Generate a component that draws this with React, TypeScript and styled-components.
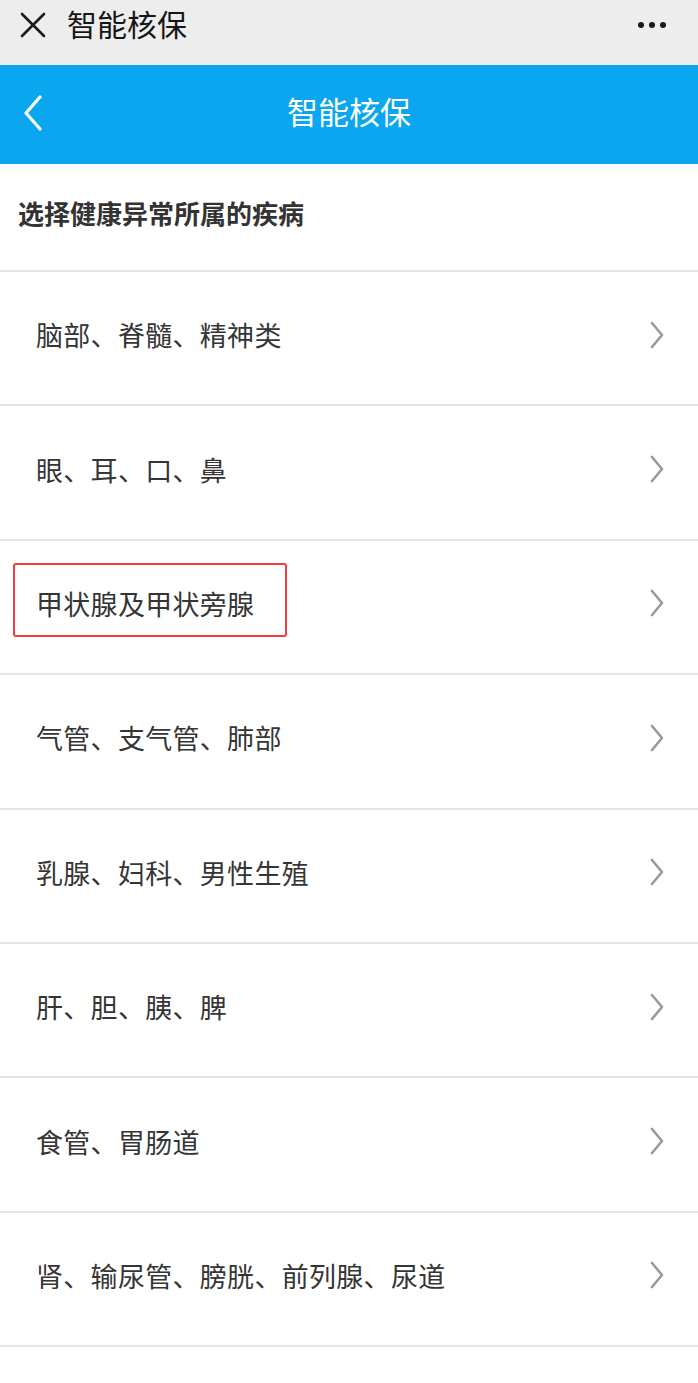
import React from "react";
import styled, { createGlobalStyle } from "styled-components";

const GlobalStyle = createGlobalStyle`
  html, body {
    margin: 0;
    padding: 0;
    background: #ffffff;
  }
  body {
    font-family: "Noto Sans CJK SC", "Noto Sans", sans-serif;
    -webkit-font-smoothing: antialiased;
  }
  * {
    box-sizing: border-box;
  }
`;

const Page = styled.div`
  width: 698px;
  min-height: 1383px;
  display: flex;
  flex-direction: column;
  background: #ffffff;
`;

const TopBar = styled.div`
  height: 65px;
  background: #ededed;
  display: flex;
  align-items: center;
  padding: 0 32px 15px 20px;
`;

const TopTitle = styled.div`
  flex: 1;
  margin-left: 21px;
  font-size: 30px;
  line-height: 1;
  color: #161616;
  padding-bottom: 4px;
`;

const NavBar = styled.div`
  height: 99px;
  background: #0aa6ef;
  display: grid;
  grid-template-columns: 80px 1fr 80px;
  align-items: center;
`;

const BackButton = styled.div`
  display: flex;
  align-items: center;
  padding-left: 22px;
  padding-bottom: 4px;
`;

const NavTitle = styled.div`
  text-align: center;
  color: #ffffff;
  font-size: 31px;
  line-height: 1;
  padding-bottom: 8px;
`;

const Header = styled.div`
  height: 108px;
  padding: 0 0 8px 18px;
  display: flex;
  align-items: center;
  border-bottom: 2px solid #e4e4e4;
  font-size: 26px;
  font-weight: 700;
  color: #333333;
  line-height: 1;
`;

const Row = styled.div`
  height: 134.4px;
  display: flex;
  align-items: center;
  justify-content: space-between;
  padding: 0 33px 7px 36px;
  border-bottom: 2px solid #e4e4e4;
`;

const Label = styled.span<{ $marked?: boolean }>`
  position: relative;
  font-size: 27px;
  line-height: 1;
  color: #353535;
  letter-spacing: 0.3px;

  ${(p) =>
    p.$marked &&
    `
    &::after {
      content: "";
      position: absolute;
      left: -23px;
      right: -33px;
      top: -27px;
      bottom: -20px;
      border: 2px solid #e8403a;
      border-radius: 3px;
    }
  `}
`;

const Dots = styled.div`
  display: flex;
  gap: 5px;
`;

const Dot = styled.span`
  width: 6px;
  height: 6px;
  border-radius: 50%;
  background: #1a1a1a;
`;

const CloseIcon = () => (
  <svg width="26" height="26" viewBox="0 0 26 26">
    <path d="M2 2 L24 24 M24 2 L2 24" stroke="#1a1a1a" strokeWidth="2.6" strokeLinecap="round" />
  </svg>
);

const BackIcon = () => (
  <svg width="22" height="36" viewBox="0 0 22 36">
    <path d="M18 2 L4 18 L18 34" stroke="#ffffff" strokeWidth="3.2" fill="none" strokeLinecap="round" strokeLinejoin="round" />
  </svg>
);

const Chevron = () => (
  <svg width="16" height="28" viewBox="0 0 16 28">
    <path d="M3 2 L13 14 L3 26" stroke="#9a9a9a" strokeWidth="2.6" fill="none" strokeLinecap="round" strokeLinejoin="round" />
  </svg>
);

const categories = [
  "脑部、脊髓、精神类",
  "眼、耳、口、鼻",
  "甲状腺及甲状旁腺",
  "气管、支气管、肺部",
  "乳腺、妇科、男性生殖",
  "肝、胆、胰、脾",
  "食管、胃肠道",
  "肾、输尿管、膀胱、前列腺、尿道",
];

export default function App() {
  return (
    <>
      <GlobalStyle />
      <Page>
        <TopBar>
          <CloseIcon />
          <TopTitle>智能核保</TopTitle>
          <Dots>
            <Dot />
            <Dot />
            <Dot />
          </Dots>
        </TopBar>
        <NavBar>
          <BackButton>
            <BackIcon />
          </BackButton>
          <NavTitle>智能核保</NavTitle>
          <div />
        </NavBar>
        <Header>选择健康异常所属的疾病</Header>
        {categories.map((name, i) => (
          <Row key={name}>
            <Label $marked={i === 2}>{name}</Label>
            <Chevron />
          </Row>
        ))}
      </Page>
    </>
  );
}
